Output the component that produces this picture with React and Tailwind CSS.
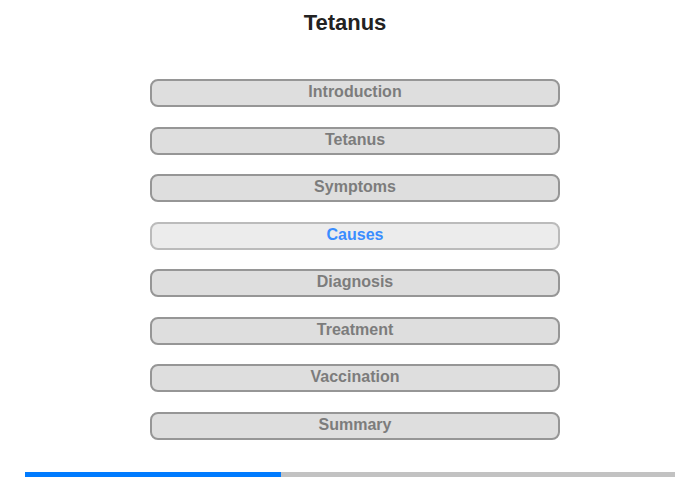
const sections = [
  "Introduction",
  "Tetanus",
  "Symptoms",
  "Causes",
  "Diagnosis",
  "Treatment",
  "Vaccination",
  "Summary",
];

export default function App() {
  const active = "Causes";

  return (
    <div className="w-[700px] h-[480px] bg-white font-['Liberation_Sans',Arial,sans-serif] flex flex-col">
      <h1 className="w-[690px] text-center text-[22px] leading-[26px] font-bold text-[#222] pt-[10px]">
        Tetanus
      </h1>

      <div className="ml-[150px] mt-[43px] w-[410px] flex flex-col gap-[19.5px]">
        {sections.map((name) =>
          name === active ? (
            <button
              key={name}
              className="h-[28px] pb-[2px] rounded-[8px] border-2 border-[#bbbbbb] bg-[#ececec] text-[16px] font-bold text-[#3a8dff] leading-none"
            >
              {name}
            </button>
          ) : (
            <button
              key={name}
              className="h-[28px] pb-[2px] rounded-[8px] border-2 border-[#969696] bg-[#dedede] text-[16px] font-bold text-[#7c7c7c] leading-none"
            >
              {name}
            </button>
          )
        )}
      </div>

      <div className="mx-[25px] mt-[32px] h-[5px] bg-[#c2c2c2] flex">
        <div className="w-[256px] bg-[#007bff]" />
      </div>
    </div>
  );
}
